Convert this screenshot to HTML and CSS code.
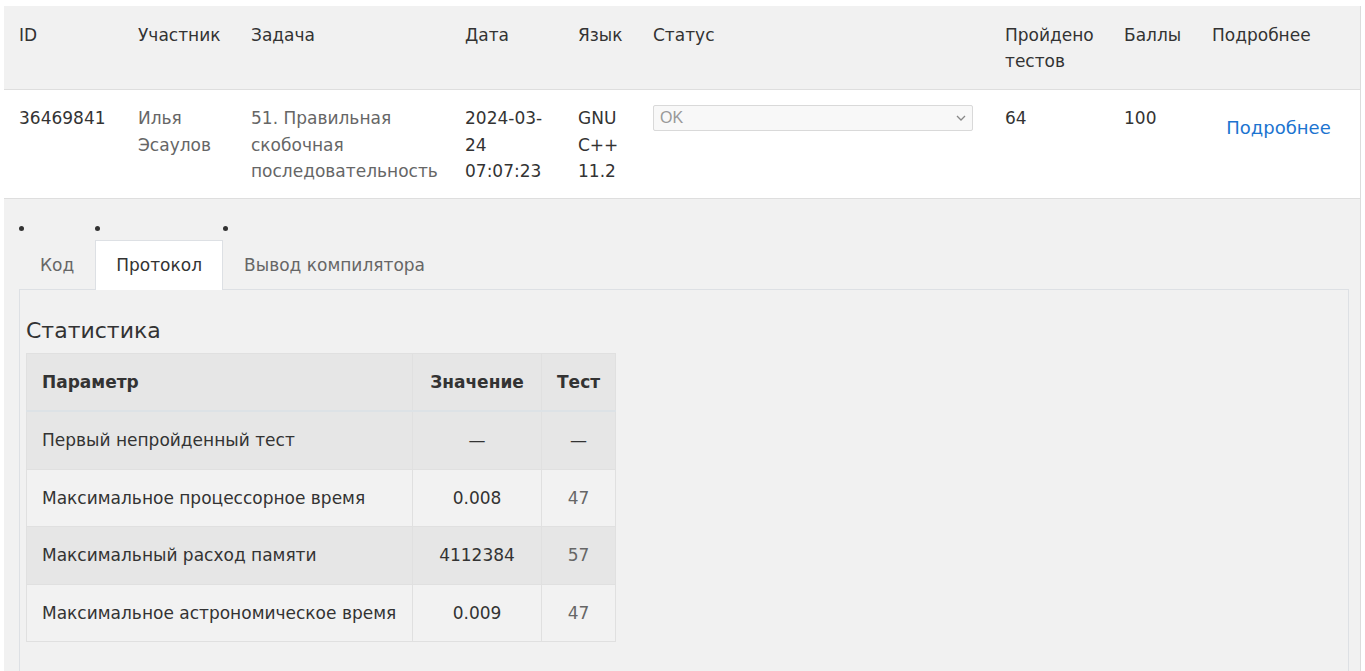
FILE: index.html
```html
<!DOCTYPE html>
<html lang="ru">
<head>
<meta charset="utf-8">
<title>Посылка 36469841</title>
<link rel="stylesheet" href="styles.css">
</head>
<body>
<div class="page">
  <table class="runs">
    <colgroup>
      <col class="c-id"><col class="c-user"><col class="c-task"><col class="c-date"><col class="c-lang"><col class="c-status"><col class="c-tests"><col class="c-score"><col class="c-more">
    </colgroup>
    <thead>
      <tr>
        <th>ID</th><th>Участник</th><th>Задача</th><th>Дата</th><th>Язык</th><th>Статус</th><th>Пройдено тестов</th><th>Баллы</th><th>Подробнее</th>
      </tr>
    </thead>
    <tbody>
      <tr>
        <td>36469841</td>
        <td class="muted">Илья Эсаулов</td>
        <td class="muted">51. Правильная скобочная последовательность</td>
        <td>2024-03-24 07:07:23</td>
        <td>GNU C++ 11.2</td>
        <td>
          <div class="select"><span>OK</span>
            <svg class="chev" width="10" height="6" viewBox="0 0 10 6"><path d="M1 1l4 4 4-4" fill="none" stroke="#888" stroke-width="1.3"/></svg>
          </div>
        </td>
        <td>64</td>
        <td>100</td>
        <td class="more"><a href="#">Подробнее</a></td>
      </tr>
    </tbody>
  </table>

  <ul class="tabs">
    <li><a href="#">Код</a></li>
    <li class="active"><a href="#">Протокол</a></li>
    <li><a href="#">Вывод компилятора</a></li>
  </ul>

  <div class="panel">
    <h3>Статистика</h3>
    <table class="stats">
      <colgroup><col class="s-param"><col class="s-val"><col class="s-test"></colgroup>
      <thead>
        <tr><th class="left">Параметр</th><th>Значение</th><th>Тест</th></tr>
      </thead>
      <tbody>
        <tr><td class="left">Первый непройденный тест</td><td>—</td><td>—</td></tr>
        <tr><td class="left">Максимальное процессорное время</td><td>0.008</td><td class="num">47</td></tr>
        <tr><td class="left">Максимальный расход памяти</td><td>4112384</td><td class="num">57</td></tr>
        <tr><td class="left">Максимальное астрономическое время</td><td>0.009</td><td class="num">47</td></tr>
      </tbody>
    </table>
  </div>
</div>
</body>
</html>
```

FILE: styles.css
```css
html, body {
  margin: 0;
  padding: 0;
  background: #fff;
}
body {
  font-family: "DejaVu Sans", Verdana, sans-serif;
  font-size: 17px;
  color: #333;
  line-height: 26px;
}
.page {
  margin: 6px 0 0 4px;
  width: 1357px;
  background: #f1f1f1;
  border-right: 1px solid #dcdcdc;
  box-sizing: border-box;
  height: 665px;
  overflow: hidden;
}
.runs {
  width: 1356px;
  border-collapse: collapse;
  table-layout: fixed;
}
.c-id { width: 119px; }
.c-user { width: 113px; }
.c-task { width: 214px; }
.c-date { width: 113px; }
.c-lang { width: 75px; }
.c-status { width: 352px; }
.c-tests { width: 119px; }
.c-score { width: 88px; }
.c-more { width: 163px; }
.runs th {
  text-align: left;
  font-weight: normal;
  vertical-align: top;
  padding: 16px 15px 15px;
  background: #f1f1f1;
  border-bottom: 1px solid #dedede;
}
.runs td {
  vertical-align: top;
  line-height: 26.5px;
  padding: 15px 15px 13px;
  background: #fff;
  border-bottom: 1px solid #dedede;
}
.runs .muted { color: #666; }
.select {
  display: flex;
  align-items: center;
  justify-content: space-between;
  width: 320px;
  height: 26px;
  box-sizing: border-box;
  border: 1px solid #d9d9d9;
  border-radius: 2px;
  background: #f8f8f8;
  padding: 0 6px;
  font-family: "Liberation Sans", Arial, sans-serif;
  font-size: 16px;
  color: #999;
}
.runs td.more {
  text-align: center;
  padding-top: 25px;
}
.more a {
  color: #1c74d0;
  text-decoration: none;
  font-size: 18px;
}
.tabs {
  list-style: none;
  margin: 0;
  padding: 27px 0 0 15px;
  display: flex;
  position: relative;
  z-index: 1;
}
.tabs li::before {
  content: "";
  display: block;
  width: 5px;
  height: 5px;
  border-radius: 50%;
  background: #333;
  margin: 0 0 9px 0;
}
.tabs a {
  display: block;
  padding: 11px 20px;
  color: #666;
  text-decoration: none;
  border: 1px solid transparent;
  border-bottom: 0;
  margin-bottom: -1px;
}
.tabs .active a {
  background: #fff;
  color: #333;
  border-color: #dde0e4;
  padding-bottom: 12px;
}
.panel {
  margin: 0 11px 0 15px;
  border: 1px solid #dde0e4;
  padding: 26px 6px 30px;
  background: #f1f1f1;
}
.panel h3 {
  margin: 0 0 7px;
  font-size: 22px;
  font-weight: normal;
  line-height: 30px;
  color: #333;
}
.stats {
  border-collapse: collapse;
  table-layout: fixed;
  width: 589px;
}
.s-param { width: 386px; }
.s-val { width: 129px; }
.s-test { width: 74px; }
.stats th, .stats td {
  padding: 15px;
  line-height: 26.5px;
  text-align: center;
  border: 1px solid #e0e0e0;
}
.stats th {
  font-weight: bold;
  background: #e6e6e6;
  border-bottom: 2px solid #dde2e6;
}
.stats .left { text-align: left; }
.stats tbody tr:nth-child(odd) td { background: #e6e6e6; }
.stats tbody tr:nth-child(even) td { background: #f2f2f2; }
.stats td.num { color: #666; }
```
